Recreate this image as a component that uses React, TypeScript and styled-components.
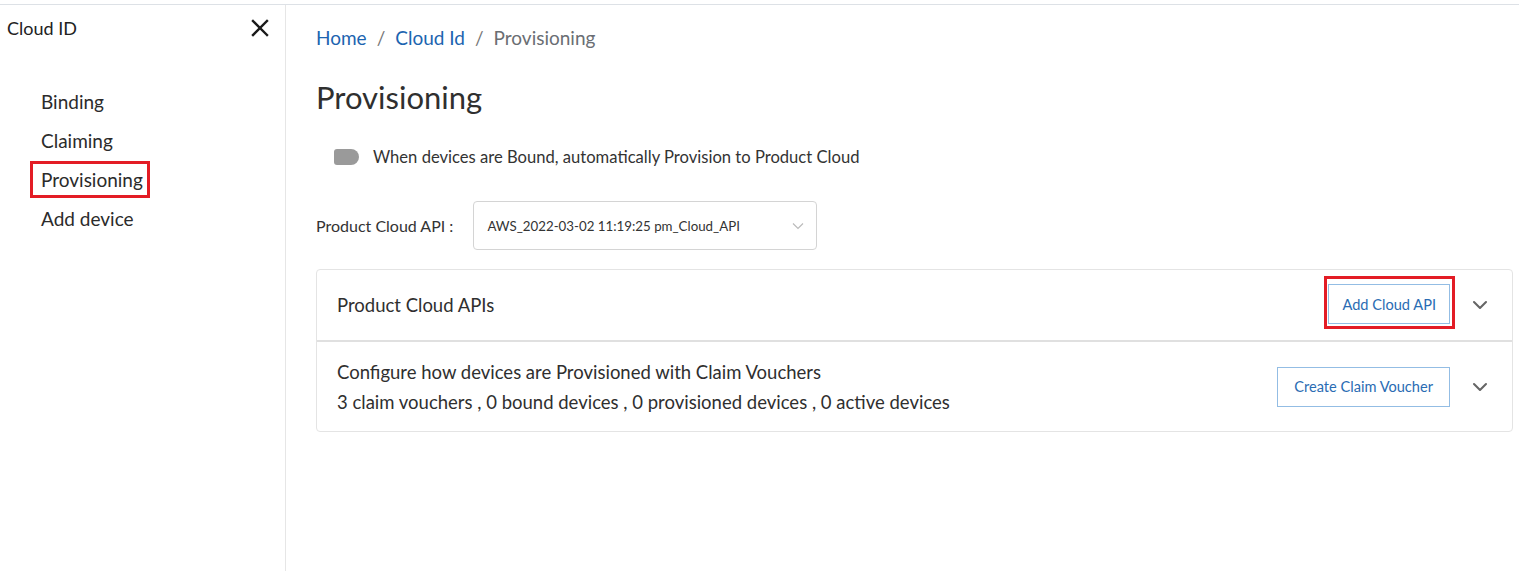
import React from "react";
import styled, { createGlobalStyle } from "styled-components";

const Global = createGlobalStyle`
  html, body { margin: 0; padding: 0; background: #fff; }
  body { font-family: Lato, "Noto Sans", sans-serif; color: #333; }
  * { box-sizing: border-box; }
`;

const Page = styled.div`
  width: 1519px;
  height: 571px;
  display: flex;
  flex-direction: column;
  overflow: hidden;
`;

const TopRule = styled.div`
  height: 5px;
  border-bottom: 1px solid #dde1e6;
  flex: none;
`;

const Body = styled.div`
  flex: 1;
  display: flex;
`;

const Sidebar = styled.aside`
  width: 286px;
  flex: none;
  border-right: 1px solid #e6e6e6;
  display: flex;
  flex-direction: column;
`;

const SideHead = styled.div`
  display: flex;
  justify-content: space-between;
  align-items: center;
  padding: 10px 14px 0 7px;
  height: 36px;
`;

const SideTitle = styled.div`
  font-size: 18px;
  color: #222;
`;

const CloseBtn = styled.button`
  border: 0;
  background: none;
  padding: 0;
  width: 22px;
  height: 22px;
  display: flex;
  align-items: center;
  justify-content: center;
  cursor: pointer;
`;

const Nav = styled.nav`
  display: flex;
  flex-direction: column;
  padding: 42px 0 0 30px;
  gap: 2px;
`;

const NavItem = styled.a<{ $marked?: boolean }>`
  align-self: flex-start;
  font-size: 19px;
  color: #2b2b2b;
  padding: 0 0 0 ${(p) => (p.$marked ? "8px" : "11px")};
  padding-right: ${(p) => (p.$marked ? "4px" : "0")};
  height: 37px;
  line-height: ${(p) => (p.$marked ? "31px" : "37px")};
  border: ${(p) => (p.$marked ? "3px solid #e31c25" : "0")};
  text-decoration: none;
`;

const Main = styled.main`
  flex: 1;
  padding: 19px 6px 0 30px;
  display: flex;
  flex-direction: column;
`;

const Crumbs = styled.div`
  display: flex;
  gap: 10px;
  font-size: 19px;
  height: 26px;
  align-items: center;
`;

const Crumb = styled.span<{ $link?: boolean }>`
  color: ${(p) => (p.$link ? "#1c64b0" : "#6a6e73")};
`;

const Sep = styled.span`
  color: #777;
`;

const Title = styled.h1`
  margin: 26px 0 0;
  font-size: 31px;
  font-weight: 400;
  color: #2f2f2f;
  height: 42px;
  line-height: 42px;
`;

const ToggleRow = styled.div`
  display: flex;
  align-items: center;
  gap: 14px;
  margin: 29px 0 0 18px;
  font-size: 16.6px;
  color: #333;
`;

const Switch = styled.span`
  width: 25px;
  height: 16px;
  border-radius: 3px 8px 8px 3px;
  background: #9a9a9a;
  display: inline-block;
`;

const ApiRow = styled.div`
  display: flex;
  align-items: center;
  gap: 20px;
  margin-top: 34px;
  font-size: 16px;
`;

const Select = styled.div`
  width: 344px;
  height: 49px;
  border: 1px solid #d4d4d4;
  border-radius: 4px;
  display: flex;
  align-items: center;
  justify-content: space-between;
  padding: 0 12px 0 13px;
  font-size: 13.3px;
  color: #333;
`;

const Card = styled.section`
  margin-top: 19px;
  border: 1px solid #e4e4e4;
  border-radius: 4px;
  display: flex;
  flex-direction: column;
`;

const CardRow = styled.div<{ $h: number; $divider?: boolean }>`
  height: ${(p) => p.$h}px;
  display: flex;
  align-items: center;
  padding: 0 24px 0 20px;
  gap: 22px;
  border-bottom: ${(p) => (p.$divider ? "2px solid #e0e0e0" : "0")};
`;

const RowText = styled.div`
  flex: 1;
  font-size: 18.5px;
  color: #2f2f2f;
  line-height: 30px;
`;

const Marked = styled.div`
  border: 3px solid #e31c25;
  padding: 5px 2px 2px 1px;
  margin: 0 -5px 5px 0;
  display: flex;
`;

const OutlineBtn = styled.button<{ $h: number; $px: number }>`
  height: ${(p) => p.$h}px;
  padding: 0 ${(p) => p.$px}px;
  border: 1px solid #93bde4;
  background: #fff;
  color: #2a6cb3;
  font-family: inherit;
  font-size: 14.6px;
  cursor: pointer;
`;

const Chevron = () => (
  <svg width="16" height="10" viewBox="0 0 16 10" fill="none">
    <path d="M2 2l6 6 6-6" stroke="#666" strokeWidth="2.1" strokeLinecap="round" strokeLinejoin="round" />
  </svg>
);

export default function App() {
  return (
    <Page>
      <Global />
      <TopRule />
      <Body>
        <Sidebar>
          <SideHead>
            <SideTitle>Cloud ID</SideTitle>
            <CloseBtn aria-label="Close">
              <svg width="18" height="18" viewBox="0 0 18 18">
                <path d="M2 2l14 14M16 2L2 16" stroke="#1a1a1a" strokeWidth="2.4" strokeLinecap="square" />
              </svg>
            </CloseBtn>
          </SideHead>
          <Nav>
            <NavItem>Binding</NavItem>
            <NavItem>Claiming</NavItem>
            <NavItem $marked>Provisioning</NavItem>
            <NavItem>Add device</NavItem>
          </Nav>
        </Sidebar>
        <Main>
          <Crumbs>
            <Crumb $link>Home</Crumb>
            <Sep>/</Sep>
            <Crumb $link>Cloud Id</Crumb>
            <Sep>/</Sep>
            <Crumb>Provisioning</Crumb>
          </Crumbs>
          <Title>Provisioning</Title>
          <ToggleRow>
            <Switch />
            When devices are Bound, automatically Provision to Product Cloud
          </ToggleRow>
          <ApiRow>
            Product Cloud API :
            <Select>
              AWS_2022-03-02 11:19:25 pm_Cloud_API
              <svg width="12" height="8" viewBox="0 0 12 8" fill="none">
                <path d="M1 1.5l5 5 5-5" stroke="#bbb" strokeWidth="1.2" />
              </svg>
            </Select>
          </ApiRow>
          <Card>
            <CardRow $h={72} $divider>
              <RowText>Product Cloud APIs</RowText>
              <Marked>
                <OutlineBtn $h={40} $px={13}>Add Cloud API</OutlineBtn>
              </Marked>
              <Chevron />
            </CardRow>
            <CardRow $h={89}>
              <RowText>
                Configure how devices are Provisioned with Claim Vouchers
                <br />
                3 claim vouchers , 0 bound devices , 0 provisioned devices , 0 active devices
              </RowText>
              <OutlineBtn $h={40} $px={16}>Create Claim Voucher</OutlineBtn>
              <Chevron />
            </CardRow>
          </Card>
        </Main>
      </Body>
    </Page>
  );
}
